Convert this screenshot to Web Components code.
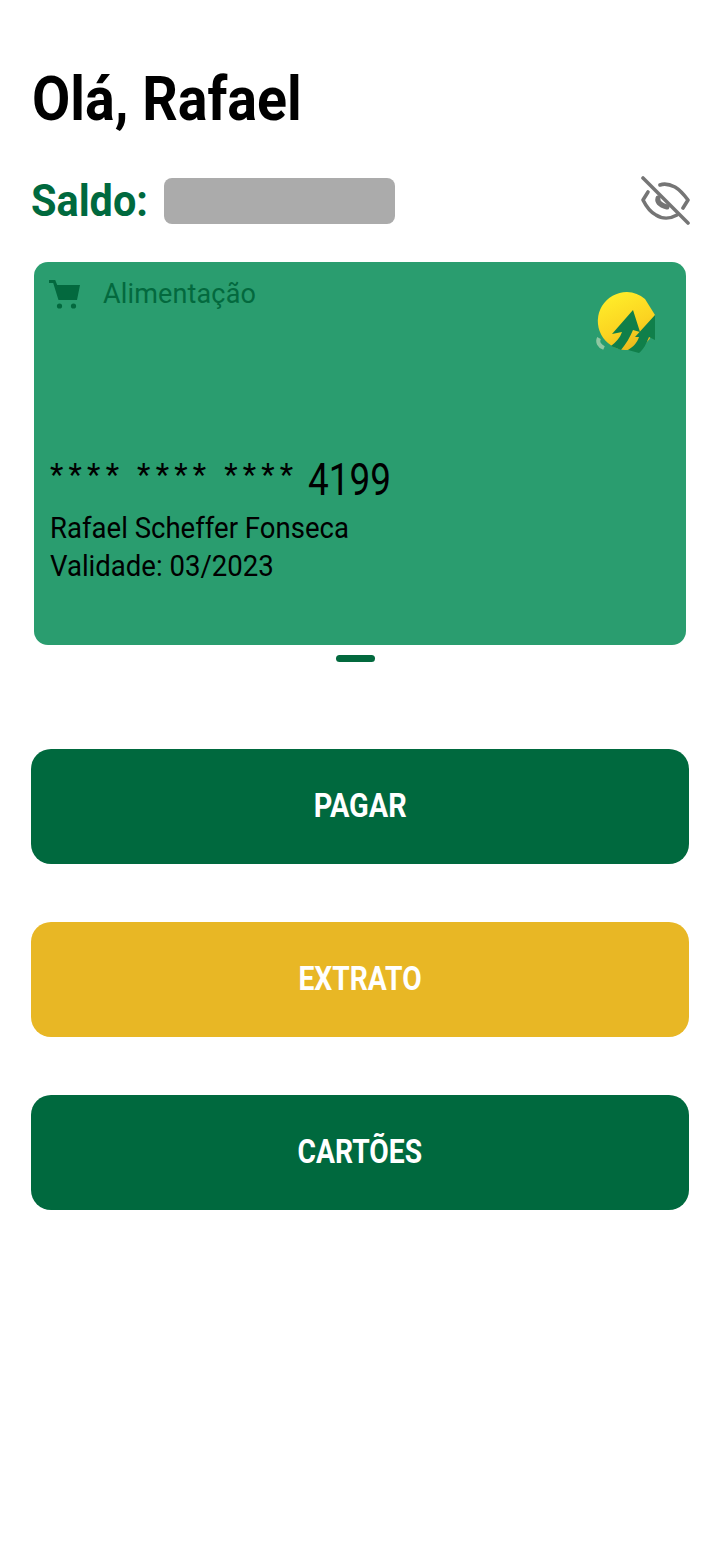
<!DOCTYPE html>
<html lang="pt"><head><meta charset="utf-8"><title>Olá, Rafael</title>
<style>
html,body{margin:0;padding:0;background:#fff}
body{width:720px;height:1558px;overflow:hidden;font-family:Roboto,sans-serif}
home-screen{display:block}
</style></head><body>
<home-screen>
  <page-header name="Olá, Rafael"></page-header>
  <balance-row></balance-row>
  <food-card holder="Rafael Scheffer Fonseca" valid="Validade: 03/2023" last="4199" kind="Alimentação"></food-card>
  <action-button class="first" sx=".875">PAGAR</action-button>
  <action-button variant="yellow" sx=".855">EXTRATO</action-button>
  <action-button sx=".855">CARTÕES</action-button>
</home-screen>
<script>
const sans='Roboto,sans-serif';
class HomeScreen extends HTMLElement{constructor(){super();this.attachShadow({mode:'open'}).innerHTML=`<style>:host{display:flex;flex-direction:column;padding-top:66px}</style><slot></slot>`}}
class PageHeader extends HTMLElement{connectedCallback(){this.attachShadow({mode:'open'}).innerHTML=`<style>:host{display:block;padding:0 32px;height:66px}
h1{margin:0;font:700 61px/66px ${sans};color:#000;transform:scaleX(.91);transform-origin:left;width:max-content}</style><h1>${this.getAttribute('name')}</h1>`}}
class BalanceRow extends HTMLElement{constructor(){super();this.attachShadow({mode:'open'}).innerHTML=`<style>:host{display:flex;align-items:center;margin-top:46px;padding:0 30px 0 31px;height:46px}
.w{width:133px;flex:none}
.l{display:block;width:max-content;font:700 45px/46px ${sans};color:#00693e;transform:scaleX(.92);transform-origin:left}
.box{width:231px;height:46px;border-radius:8px;background:#ababab}
svg{margin-left:auto;width:50px;height:50px;display:block}</style>
<div class="w"><span class="l">Saldo:</span></div><div class="box"></div>
<svg viewBox="0 0 50 50" fill="none" stroke="#757575" stroke-width="3.6" stroke-linecap="round" stroke-linejoin="round"><path d="M3 2L48 47"/><path d="M20 9C25 7 31 9 35 11C40 14 45 20 48 24L43 32"/><path d="M8 16L3 24C6 30 10 36 16 39C22 43 30 43 37 39"/><path d="M18 22C17 26 20 29 27 31" stroke-width="5"/></svg>`}}
class FoodCard extends HTMLElement{connectedCallback(){const a=n=>this.getAttribute(n);this.attachShadow({mode:'open'}).innerHTML=`<style>:host{display:block;padding:0 34px;margin-top:38px}
.card{height:383px;border-radius:14px;background:#2a9d6f;padding:14px 16px 0;box-sizing:border-box;display:flex;flex-direction:column;position:relative}
.top{display:flex;align-items:center;gap:21px;height:36px}
.top svg{width:34px;height:34px;margin-left:-2px;flex:none}
.kind{font:400 27px/36px Roboto,sans-serif;letter-spacing:.15px;color:#03693e;height:36px}
.logo{position:absolute;right:27px;top:28px;width:64px;height:66px}
.num{margin-top:145px;display:flex;align-items:flex-start;height:46px;color:#000;white-space:pre}
.stars{font:400 31px/36px ${sans};letter-spacing:5.2px;width:258px;flex:none}
.last{display:block;font:400 45px/46px ${sans};transform:scaleX(.82);transform-origin:left}
.t{font:400 29px/38px ${sans};color:#000;transform:scaleX(.95);transform-origin:left;width:max-content}
.t.a{margin-top:6px}
.dot{width:39px;height:7px;border-radius:4px;background:#03693e;margin:10px 0 0 302px}
</style><div class="card"><div class="top"><svg viewBox="0 0 34 34"><path fill="#03693e" d="M1 3h6.2l2 5H32l-3 15H10.5L5.2 6H1z"/><circle cx="11.5" cy="29" r="2.6" fill="#03693e"/><circle cx="25.5" cy="29" r="2.6" fill="#03693e"/></svg><span class="kind">${a('kind')}</span></div>
<svg class="logo" viewBox="0 0 64 66"><defs><linearGradient id="g" x1=".25" y1="0" x2=".7" y2="1"><stop offset="0" stop-color="#ffee2a"/><stop offset=".6" stop-color="#fbd321"/><stop offset="1" stop-color="#e8b41c"/></linearGradient></defs><path d="M4 48C2 52 4 56 9 58" fill="none" stroke="#8fc7a2" stroke-width="4"/><path d="M32 2A29 29 0 1 0 56 47L60 25L50 9A29 29 0 0 0 32 2Z" fill="url(#g)"/><path fill="#107f4a" d="M38 20L45 42L38 40C35 47 31 54 26 60L16 56C21 52 25 48 27 42L17 44Z"/><path fill="#107f4a" d="M60 25V50L54 47C51 54 49 59 44 63L33 60C38 57 42 53 44 47L40 47Z"/></svg>
<div class="num"><span class="stars">**** **** ****</span><span class="last">${a('last')}</span></div>
<div class="t a">${a('holder')}</div><div class="t">${a('valid')}</div></div>
<div class="dot"></div>`}}
class ActionButton extends HTMLElement{connectedCallback(){this.attachShadow({mode:'open'}).innerHTML=`<style>:host{display:block;margin:0 31px 58px}
:host(.first){margin-top:87px}
button{display:flex;align-items:center;justify-content:center;width:100%;height:115px;border:0;border-radius:20px;background:#00693e;color:#fff;font:700 33px/1 ${sans};padding:0 0 2px}
span{display:block;transform:scaleX(${this.getAttribute('sx')||1})}
:host([variant=yellow]) button{background:#e8b725}
</style><button><span><slot></slot></span></button>`}}
customElements.define('home-screen',HomeScreen);customElements.define('page-header',PageHeader);customElements.define('balance-row',BalanceRow);customElements.define('food-card',FoodCard);customElements.define('action-button',ActionButton);
</script></body></html>
